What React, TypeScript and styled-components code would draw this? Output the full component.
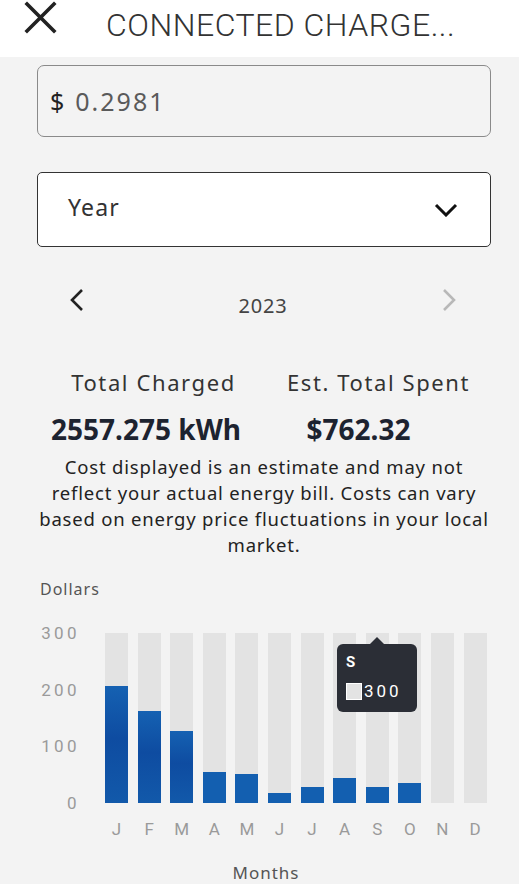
import React from 'react'
import styled, { createGlobalStyle } from 'styled-components'

const GlobalStyle = createGlobalStyle`
    html, body {
        margin: 0;
        padding: 0;
        background: #f3f3f3;
        font-family: "Noto Sans", "Open Sans", sans-serif;
        color: #222;
    }
`

const Page = styled.div`
    width: 519px;
    height: 884px;
    overflow: hidden;
    background: #f3f3f3;
`

const Header = styled.div`
    height: 57px;
    background: #fff;
    display: flex;
    align-items: flex-start;
    box-sizing: border-box;
    padding-left: 24px;
`

const CloseButton = styled.div`
    width: 33px;
    height: 33px;
    margin-top: 1px;
    display: flex;
`

const Title = styled.div`
    font-family: Roboto, "Liberation Sans", sans-serif;
    font-weight: 300;
    font-size: 32px;
    letter-spacing: 0.5px;
    color: #333;
    margin-left: 49px;
    margin-top: 6px;
    line-height: 38px;
    white-space: nowrap;
`

const Content = styled.div`
    padding: 8px 28px 0 37px;
    display: flex;
    flex-direction: column;
`

const RateInput = styled.div`
    height: 72px;
    box-sizing: border-box;
    border: 1px solid #8a8a8a;
    border-radius: 7px;
    display: flex;
    align-items: center;
    padding-left: 12px;
    font-size: 25px;
    letter-spacing: 2px;
`

const Currency = styled.span`
    color: #222;
    margin-right: 9px;
`

const RateValue = styled.span`
    color: #5a5a5a;
`

const Select = styled.div`
    margin-top: 35px;
    height: 75px;
    box-sizing: border-box;
    border: 1px solid #333;
    border-radius: 5px;
    background: #fff;
    display: flex;
    align-items: center;
    justify-content: space-between;
    padding: 0 32px 0 30px;
    font-size: 23px;
    letter-spacing: 1.2px;
    color: #333;
    & > span {
        margin-top: -6px;
    }
`

const YearNav = styled.div`
    margin-top: 41px;
    height: 34px;
    display: flex;
    align-items: center;
    justify-content: space-between;
    padding: 0 34px 0 32px;
`

const NavArrow = styled.div<{ $disabled?: boolean }>`
    width: 16px;
    height: 24px;
    display: flex;
    margin-top: -10px;
    color: ${p => (p.$disabled ? '#b8b8b8' : '#222')};
`

const YearLabel = styled.div`
    font-size: 20px;
    letter-spacing: 0.8px;
    color: #444;
`

const Stats = styled.div`
    margin-top: 45px;
    padding-left: 4px;
    display: grid;
    grid-template-columns: 1fr 1fr;
`

const StatLabel = styled.div`
    font-size: 22px;
    letter-spacing: 1.6px;
    color: #333;
    text-align: center;
`

const StatValue = styled.div<{ $offset: number }>`
    font-size: 28px;
    font-weight: 700;
    color: #1d2330;
    margin-top: 13px;
    text-align: center;
    padding-right: ${p => p.$offset}px;
`

const Disclaimer = styled.p`
    margin: 6px 0 0;
    font-size: 18.5px;
    line-height: 26px;
    letter-spacing: 0.8px;
    text-align: center;
    color: #222;
`

const ChartSection = styled.div`
    margin-top: 20px;
    position: relative;
`

const AxisTitle = styled.div`
    font-size: 16px;
    letter-spacing: 1px;
    color: #555;
    margin-left: 3px;
`

const ChartBody = styled.div`
    margin-top: 33px;
    display: flex;
`

const YAxis = styled.div`
    width: 43px;
    height: 186px;
    margin-top: -8px;
    display: flex;
    flex-direction: column;
    justify-content: space-between;
    align-items: flex-end;
    font-family: Roboto, sans-serif;
    font-size: 17px;
    letter-spacing: 3.4px;
    color: #9a9a9a;
    line-height: 16px;
`

const PlotArea = styled.div`
    margin-left: 25px;
    position: relative;
`

const Columns = styled.div`
    display: flex;
    gap: 9.6px;
`

const Column = styled.div`
    width: 23px;
    height: 170px;
    background: #e3e3e3;
    display: flex;
    flex-direction: column;
    justify-content: flex-end;
`

const Fill = styled.div<{ $deep?: boolean }>`
    background: ${p =>
        p.$deep
            ? 'linear-gradient(180deg, #1561b2 0%, #0e4ca1 45%, #1259aa 100%)'
            : '#135fb0'};
`

const MonthLabels = styled.div`
    display: flex;
    gap: 9.6px;
    margin-top: 16px;
`

const MonthLabel = styled.div`
    width: 23px;
    text-align: center;
    font-family: Roboto, sans-serif;
    font-size: 17px;
    color: #9a9a9a;
`

const XAxisTitle = styled.div`
    margin-top: 22px;
    text-align: center;
    font-size: 17px;
    letter-spacing: 1px;
    color: #555;
    padding-left: 4px;
`

const Tooltip = styled.div`
    position: absolute;
    left: 232px;
    top: 11px;
    width: 80px;
    height: 68px;
    box-sizing: border-box;
    background: #2b2e36;
    border-radius: 6px;
    padding: 9px 0 0 9px;
    color: #fff;
    &::before {
        content: '';
        position: absolute;
        left: 33px;
        top: -7px;
        border-left: 7px solid transparent;
        border-right: 7px solid transparent;
        border-bottom: 7px solid #2b2e36;
    }
`

const TooltipTitle = styled.div`
    font-family: Roboto, sans-serif;
    font-weight: 700;
    font-size: 15px;
    line-height: 18px;
`

const TooltipRow = styled.div`
    display: flex;
    align-items: center;
    margin-top: 10px;
    font-family: Roboto, sans-serif;
    font-size: 17px;
    letter-spacing: 3px;
`

const Swatch = styled.span`
    width: 14px;
    height: 15px;
    background: #e3e3e3;
    border: 1.5px solid #fff;
    margin-right: 2px;
`

const months = ['J', 'F', 'M', 'A', 'M', 'J', 'J', 'A', 'S', 'O', 'N', 'D']
const spend = [206, 162, 127, 55, 51, 18, 28, 44, 28, 35, 0, 0]
const maxY = 300

const App: React.FunctionComponent = () => {
    return (
        <Page>
            <GlobalStyle />
            <Header>
                <CloseButton>
                    <svg width="33" height="33" viewBox="0 0 33 33">
                        <path d="M3 3 L30 30 M30 3 L3 30" stroke="#222" strokeWidth="3.6" strokeLinecap="square" />
                    </svg>
                </CloseButton>
                <Title>CONNECTED CHARGE...</Title>
            </Header>
            <Content>
                <RateInput>
                    <Currency>$</Currency>
                    <RateValue>0.2981</RateValue>
                </RateInput>
                <Select>
                    <span>Year</span>
                    <svg width="24" height="14" viewBox="0 0 24 14">
                        <path d="M2 2 L12 12 L22 2" stroke="#111" strokeWidth="3" fill="none" />
                    </svg>
                </Select>
                <YearNav>
                    <NavArrow>
                        <svg width="16" height="24" viewBox="0 0 16 24">
                            <path d="M13 2 L3 12 L13 22" stroke="currentColor" strokeWidth="2.6" fill="none" />
                        </svg>
                    </NavArrow>
                    <YearLabel>2023</YearLabel>
                    <NavArrow $disabled>
                        <svg width="16" height="24" viewBox="0 0 16 24">
                            <path d="M3 2 L13 12 L3 22" stroke="currentColor" strokeWidth="2.6" fill="none" />
                        </svg>
                    </NavArrow>
                </YearNav>
                <Stats>
                    <div>
                        <StatLabel>Total Charged</StatLabel>
                        <StatValue $offset={15}>2557.275 kWh</StatValue>
                    </div>
                    <div>
                        <StatLabel>Est. Total Spent</StatLabel>
                        <StatValue $offset={40}>$762.32</StatValue>
                    </div>
                </Stats>
                <Disclaimer>
                    Cost displayed is an estimate and may not reflect your actual energy bill. Costs can vary based on
                    energy price fluctuations in your local market.
                </Disclaimer>
                <ChartSection>
                    <AxisTitle>Dollars</AxisTitle>
                    <ChartBody>
                        <YAxis>
                            <span>300</span>
                            <span>200</span>
                            <span>100</span>
                            <span>0</span>
                        </YAxis>
                        <PlotArea>
                            <Columns>
                                {spend.map((v, i) => (
                                    <Column key={i}>
                                        <Fill $deep={i < 3} style={{ height: `${(v / maxY) * 100}%` }} />
                                    </Column>
                                ))}
                            </Columns>
                            <MonthLabels>
                                {months.map((m, i) => (
                                    <MonthLabel key={i}>{m}</MonthLabel>
                                ))}
                            </MonthLabels>
                            <Tooltip>
                                <TooltipTitle>S</TooltipTitle>
                                <TooltipRow>
                                    <Swatch />
                                    300
                                </TooltipRow>
                            </Tooltip>
                        </PlotArea>
                    </ChartBody>
                    <XAxisTitle>Months</XAxisTitle>
                </ChartSection>
            </Content>
        </Page>
    )
}

export default App
